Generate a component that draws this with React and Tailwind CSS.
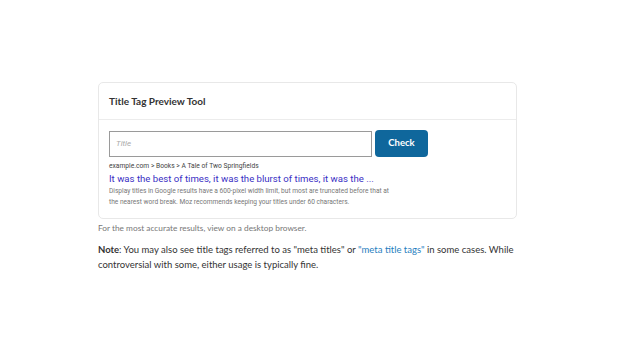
export default function App() {
  return (
    <div className="w-[640px] h-[360px] bg-white overflow-hidden" style={{ fontFamily: "Lato, 'Liberation Sans', sans-serif" }}>
      <div className="ml-[98px] w-[419px] pt-[82px]">
        <div className="border border-[#e8e8e8] rounded-[5px] bg-white">
          <div className="h-[37px] flex items-center px-[10px] border-b border-[#ececec]">
            <span className="text-[10px] font-bold text-[#333]">Title Tag Preview Tool</span>
          </div>
          <div className="px-[10px] pt-[10px] pb-[10px]">
            <div className="flex items-center gap-[3px]">
              <input
                placeholder="Title"
                className="w-[263px] h-[26px] border border-[#9a9a9a] px-[6px] text-[8px] italic placeholder-[#aaa] outline-none"
                style={{ fontFamily: "Roboto, sans-serif" }}
              />
              <button className="w-[53px] h-[27px] rounded-[4px] bg-[#0f679c] text-white text-[9.5px] font-bold">Check</button>
            </div>
            <div style={{ fontFamily: "Roboto, 'Liberation Sans', sans-serif" }}>
              <div className="mt-[4px] text-[6.7px] text-[#444] leading-[11px]">example.com &gt; Books &gt; A Tale of Two Springfields</div>
              <div className="text-[9.6px] text-[#3a2fc4] leading-[13px]">It was the best of times, it was the blurst of times, it was the ...</div>
              <div className="mt-[1px] text-[6.6px] text-[#777] leading-[11px] w-[290px]">
                Display titles in Google results have a 600-pixel width limit, but most are truncated before that at the nearest word break. Moz recommends keeping your titles under 60 characters.
              </div>
            </div>
          </div>
        </div>
        <div className="mt-[3px] text-[8.3px] text-[#777] leading-[12px]">For the most accurate results, view on a desktop browser.</div>
        <p className="mt-[8px] text-[9.5px] text-[#333] leading-[15px]">
          <span className="font-bold">Note</span>: You may also see title tags referred to as "meta titles" or <span className="text-[#1f80c0]">"meta title tags"</span> in some cases. While controversial with some, either usage is typically fine.
        </p>
      </div>
    </div>
  );
}
